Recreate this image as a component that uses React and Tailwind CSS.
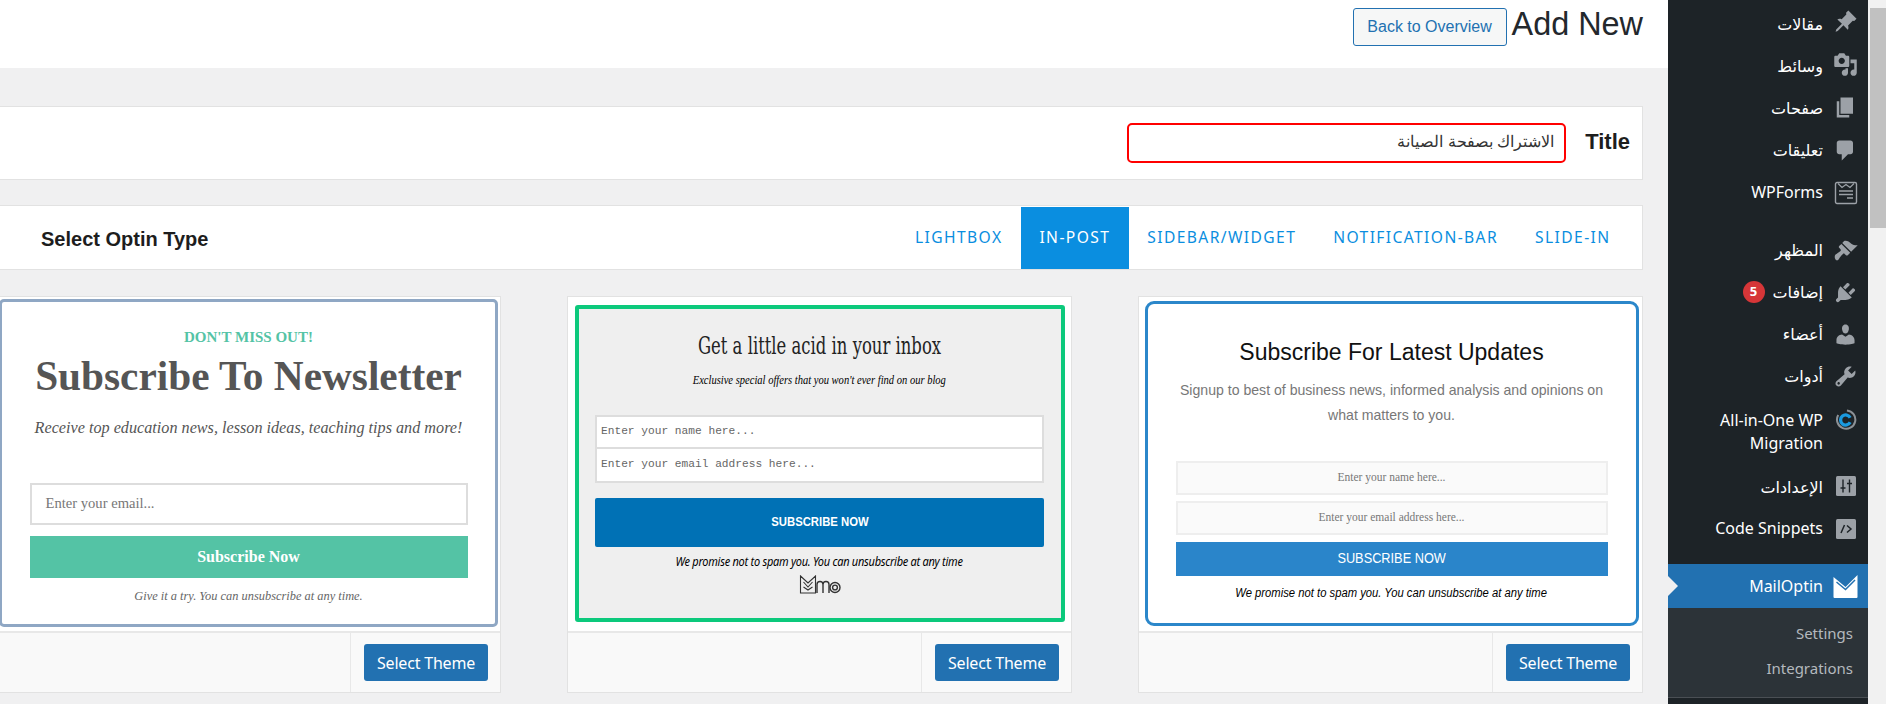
import React from "react";

const icons = {
  post: "M10.44 3.02l1.82-1.82 6.55 6.55-1.82 1.82-1.18-.2-3.75 3.74c.44 1.32.42 2.7-.26 3.43l-3.46-3.46-4.57 4.57-1.69.49.49-1.69 4.57-4.57L3.5 8.4c.73-.68 2.11-.7 3.43-.26l3.74-3.75-.23-1.37z",
  media: "M13 11V4c0-.55-.45-1-1-1h-1.67L9 1H5L3.67 3H2c-.55 0-1 .45-1 1v7c0 .55.45 1 1 1h10c.55 0 1-.45 1-1zM7 4.5c1.38 0 2.5 1.12 2.5 2.5S8.38 9.5 7 9.5 4.5 8.38 4.5 7 5.62 4.5 7 4.5zM14 6h5v10.5c0 1.38-1.12 2.5-2.5 2.5S14 17.88 14 16.5s1.12-2.5 2.5-2.5c.17 0 .34.02.5.05V9h-3V6zm-4 8.05V13h2v3.5c0 1.38-1.12 2.5-2.5 2.5S7 17.88 7 16.5 8.12 14 9.5 14c.17 0 .34.02.5.05z",
  page: "M6 15V2h10v13H6zm-1 1h8v2H3V5h2v11z",
  comment: "M5 2h9c1.1 0 2 .9 2 2v7c0 1.1-.9 2-2 2h-2l-5 5v-5H5c-1.1 0-2-.9-2-2V4c0-1.1.9-2 2-2z",
  appearance: "M14.48 11.06L7.41 3.99l1.5-1.5c.5-.56 2.3-.47 3.51.32 1.21.8 1.43 1.28 2.91 2.1 1.18.64 2.45 1.26 4.45.85zm-.71.71L6.7 4.7 4.93 6.47c-.39.39-.39 1.02 0 1.41l1.06 1.06c.39.39.39 1.03 0 1.42-.6.6-1.43 1.11-2.21 1.69-.35.26-.7.53-1.01.84C1.43 13.23.91 15.24 1.91 17.09c.35.64 1.14 1.13 1.78.77.93-.52 1.3-1.7 1.92-2.53.72-.96 1.63-1.92 2.31-2.61.39-.39 1.02-.39 1.41 0l1.06 1.06c.39.39 1.02.39 1.41 0z",
  plugins: "M13.11 4.36L9.87 7.6 8 5.73l3.24-3.24c.35-.34 1.05-.2 1.56.32.52.51.66 1.21.31 1.55zm-8 1.77l.91-1.12 9.01 9.01-1.19.84c-.71.71-2.63 1.16-3.82 1.16H6.14L4.9 17.26c-.59.59-1.54.59-2.12 0-.59-.58-.59-1.53 0-2.12l1.24-1.24v-3.88c0-1.13.4-3.19 1.09-3.89zm7.26 3.97l3.24-3.24c.34-.35 1.04-.21 1.55.31.52.51.66 1.21.31 1.55l-3.24 3.25z",
  users: "M10 9.25c-2.27 0-2.73-3.44-2.73-3.44C7 4.02 7.82 2 9.97 2c2.16 0 2.98 2.02 2.71 3.81 0 0-.41 3.44-2.68 3.44zm0 2.57L12.72 10c2.39 0 4.52 2.33 4.52 4.53v2.49s-3.65 1.13-7.24 1.13c-3.65 0-7.24-1.13-7.24-1.13v-2.49c0-2.25 1.94-4.48 4.47-4.48z",
  tools: "M16.68 9.77c-1.34 1.34-3.3 1.67-4.95.99l-5.41 6.52c-.99.99-2.59.99-3.58 0s-.99-2.59 0-3.57l6.52-5.42c-.68-1.65-.35-3.61.99-4.95 1.28-1.28 3.12-1.62 4.72-1.06l-2.89 2.89 2.82 2.82 2.86-2.87c.53 1.58.18 3.39-1.08 4.65zM3.81 16.21c.4.39 1.04.39 1.43 0 .4-.4.4-1.04 0-1.43-.39-.4-1.03-.4-1.43 0-.39.39-.39 1.03 0 1.43z",
};

function Dash({ name }) {
  return (
    <svg viewBox="0 0 20 20" className="w-[25px] h-[25px] fill-[#9ca1a7]">
      <path d={icons[name]} />
    </svg>
  );
}

function SettingsIcon() {
  return (
    <svg viewBox="0 0 20 20" className="w-[20px] h-[20px]">
      <rect width="20" height="20" rx="1.5" fill="#9ca1a7" />
      <path d="M7 3.5v13M4.5 12h5M13.5 3.5v13M11 7.5h5" fill="none" stroke="#1d2327" strokeWidth="1.4" />
    </svg>
  );
}

function WpformsIcon() {
  return (
    <svg viewBox="0 0 24 24" className="w-6 h-6" fill="none" stroke="#9ca1a7">
      <rect x="1.5" y="1.5" width="21" height="21" rx="1.5" strokeWidth="1.4" />
      <path d="M4 2.5l4 4 4-3 4 3 4-4" strokeWidth="1.2" />
      <path d="M5 10h14M5 13.5h14M13 17h6" strokeWidth="1.6" />
    </svg>
  );
}

function MigrationIcon() {
  return (
    <svg viewBox="0 0 24 24" className="w-[22px] h-[22px]" fill="none">
      <path d="M13 1.6a10 10 0 1 1-9.5 5" stroke="#8c9196" strokeWidth="2.2" />
      <path d="M16.5 9.5a5.5 5.5 0 1 0 0 5" stroke="#1a9ae0" strokeWidth="3.6" />
    </svg>
  );
}

function CodeIcon() {
  return (
    <svg viewBox="0 0 20 20" className="w-[20px] h-[20px]">
      <rect width="20" height="20" rx="1.5" fill="#9ca1a7" />
      <path d="M8.5 6L5 14M11 6.5l4 3.5-4 3.5" fill="none" stroke="#1d2327" strokeWidth="1.5" />
    </svg>
  );
}

function MailIcon() {
  return (
    <svg viewBox="0 0 24 23" className="w-[25px] h-[23px]">
      <path d="M0 2l12 10L24 0v22a1 1 0 0 1-1 1H1a1 1 0 0 1-1-1z" fill="#fff" />
      <path d="M3 7l9 7.5L21.5 5" fill="none" stroke="#2271b1" strokeWidth="1.5" />
    </svg>
  );
}

function MmoLogo() {
  return (
    <svg viewBox="0 0 42 19" className="w-[42px] h-[19px]" fill="none" stroke="#333" strokeWidth="1.4">
      <path d="M1.5 1l7.5 7 7.5-7v17h-15zM4.5 7l4.5 5 4.5-5M4.5 12l4.5 3 4.5-3" strokeWidth="1.1" />
      <path d="M18 18V9.5a3 3 0 0 1 6 0V18M24 9.5a3 3 0 0 1 6 0V18" />
      <circle cx="36" cy="12.5" r="5" />
      <circle cx="36" cy="12.5" r="2.4" />
    </svg>
  );
}

function MenuRow({ label, icon, badge, className, iconClass = "" }) {
  return (
    <div className={"flex items-center justify-end text-white " + className}>
      {badge && (
        <span className="mr-2 w-[22px] h-[22px] rounded-full bg-[#d63638] text-[13px] font-bold flex items-center justify-center">
          {badge}
        </span>
      )}
      <span className="text-right text-[16px] leading-[23px] max-w-[125px]">{label}</span>
      <span className={"w-[45px] flex items-center justify-center " + iconClass}>{icon}</span>
    </div>
  );
}

function Sidebar() {
  return (
    <aside className="w-[200px] shrink-0 bg-[#1d2327] h-full pt-[3px] font-['Noto_Sans','DejaVu_Sans',sans-serif] relative">
      <MenuRow className="h-[42px]" iconClass="-mt-[5px]" label="مقالات" icon={<Dash name="post" />} />
      <MenuRow className="h-[42px]" iconClass="-mt-[3px]" label="وسائط" icon={<Dash name="media" />} />
      <MenuRow className="h-[42px]" iconClass="-mt-[2px]" label="صفحات" icon={<Dash name="page" />} />
      <MenuRow className="h-[42px]" label="تعليقات" icon={<Dash name="comment" />} />
      <MenuRow className="h-[43px]" label="WPForms" icon={<WpformsIcon />} />
      <MenuRow className="h-[42px] mt-[15px]" label="المظهر" icon={<Dash name="appearance" />} />
      <MenuRow className="h-[42px]" label="إضافات" badge="5" icon={<Dash name="plugins" />} />
      <MenuRow className="h-[42px]" label="أعضاء" icon={<Dash name="users" />} />
      <MenuRow className="h-[42px]" label="أدوات" icon={<Dash name="tools" />} />
      <MenuRow className="h-[69px]" iconClass="self-start mt-[12px]" label="All-in-One WP Migration" icon={<MigrationIcon />} />
      <MenuRow className="h-[42px]" iconClass="-mt-[3px]" label="الإعدادات" icon={<SettingsIcon />} />
      <MenuRow className="h-[41px]" label="Code Snippets" icon={<CodeIcon />} />
      <div className="relative mt-[15px]">
        <MenuRow className="h-[44px] bg-[#2271b1]" label="MailOptin" icon={<MailIcon />} />
        <span className="absolute left-0 top-[12px] border-y-[10px] border-y-transparent border-l-[10px] border-l-[#f0f0f1]" />
      </div>
      <div className="bg-[#2c3338] h-[90px] pt-[8px] pr-[15px] text-right text-[15px] text-[#b4b9be] border-b border-[#4a4f54]">
        <div className="leading-[35px]">Settings</div>
        <div className="leading-[35px]">Integrations</div>
      </div>
    </aside>
  );
}

function SelectButton() {
  return (
    <button className="w-[124px] h-[37px] rounded-[3px] bg-[#2271b1] text-white text-[16px] font-['Noto_Sans',sans-serif] tracking-[-0.2px]">
      Select Theme
    </button>
  );
}

function Card({ frame, className }) {
  return (
    <div className="shrink-0 w-[505px] h-[397px] bg-white border border-[#e2e2e2] flex flex-col">
      <div className={"h-[334px] pb-[2px] flex items-center " + className}>{frame}</div>
      <div className="flex-1 bg-[#f9f9f9] border-t-2 border-[#e8e8e8] flex justify-end">
        <div className="border-l border-[#e8e8e8] w-[150px] flex items-center justify-end pr-[12px]">
          <SelectButton />
        </div>
      </div>
    </div>
  );
}

function NewsletterFrame() {
  return (
    <div className="w-[499px] h-[328px] bg-white border-[3px] border-[#8fa7c4] rounded-[5px] flex flex-col items-center font-['Liberation_Serif',serif] text-[#555]">
      <div className="mt-[25px] text-[15px] leading-[20px] font-bold text-[#54c3a5]">DON'T MISS OUT!</div>
      <div className="mt-[7px] text-[41.3px] leading-[44px] font-bold text-[#555] whitespace-nowrap">Subscribe To Newsletter</div>
      <div className="mt-[18px] text-[16.2px] leading-[24px] italic text-[#555] whitespace-nowrap">Receive top education news, lesson ideas, teaching tips and more!</div>
      <div className="mt-[43px] w-[438px] h-[42px] bg-white border-2 border-[#ddd] pl-[14px] flex items-center text-[14.6px] text-[#777]">Enter your email...</div>
      <div className="mt-[11px] w-[438px] h-[42px] bg-[#54c3a5] flex items-center justify-center text-white font-bold text-[16px]">Subscribe Now</div>
      <div className="mt-[10px] text-[12.4px] leading-[16px] italic text-[#666]">Give it a try. You can unsubscribe at any time.</div>
    </div>
  );
}

function AcidFrame() {
  return (
    <div className="w-[490px] h-[317px] bg-[#efefef] border-4 border-[#0cc97c] rounded-[3px] flex flex-col items-center text-[#222]">
      <div className="mt-[21px] text-[24px] leading-[32px] font-['DejaVu_Serif',serif] scale-x-[0.685] whitespace-nowrap">Get a little acid in your inbox</div>
      <div className="mt-[8px] text-[13px] leading-[20px] italic font-['Liberation_Serif',serif] text-black scale-x-[0.81] whitespace-nowrap">Exclusive special offers that you won't ever find on our blog</div>
      <div className="mt-[25px] w-[449px] h-[34px] bg-white border-2 border-[#ddd] pl-[4px] flex items-center text-[11.2px] font-['Liberation_Mono',monospace] text-[#666]">Enter your name here...</div>
      <div className="w-[449px] h-[34px] bg-white border-2 border-t-0 border-[#ddd] pl-[4px] flex items-center text-[11.2px] font-['Liberation_Mono',monospace] text-[#666]">Enter your email address here...</div>
      <div className="mt-[15px] w-[449px] h-[49px] rounded-[2px] bg-[#0071b5] flex items-center justify-center">
        <span className="text-white font-bold text-[13px] font-['Liberation_Sans',sans-serif] scale-x-[0.87]">SUBSCRIBE NOW</span>
      </div>
      <div className="mt-[6px] text-[12.5px] leading-[18px] italic font-['Noto_Sans',sans-serif] tracking-[-0.3px] text-black scale-x-[0.88] whitespace-nowrap">We promise not to spam you. You can unsubscribe at any time</div>
      <div className="mt-[4px]">
        <MmoLogo />
      </div>
    </div>
  );
}

function UpdatesFrame() {
  return (
    <div className="w-[494px] h-[325px] bg-white border-[3px] border-[#2b87ca] rounded-[9px] flex flex-col items-center font-['Liberation_Sans',sans-serif]">
      <div className="mt-[31px] text-[23px] leading-[34px] text-[#111] whitespace-nowrap">Subscribe For Latest Updates</div>
      <div className="mt-[9px] w-[440px] text-center text-[14.1px] leading-[25px] text-[#777]">
        Signup to best of business news, informed analysis and opinions on what matters to you.
      </div>
      <div className="mt-[33px] w-[432px] h-[34px] bg-[#fafafa] border-2 border-[#eee] flex items-center justify-center text-[11.5px] font-['Liberation_Serif',serif] text-[#777]">Enter your name here...</div>
      <div className="mt-[6px] w-[432px] h-[34px] bg-[#fafafa] border-2 border-[#eee] flex items-center justify-center text-[11.5px] font-['Liberation_Serif',serif] text-[#777]">Enter your email address here...</div>
      <div className="mt-[7px] w-[432px] h-[34px] bg-[#2a85ca] flex items-center justify-center">
        <span className="text-white text-[14.5px] scale-x-[0.88]">SUBSCRIBE NOW</span>
      </div>
      <div className="mt-[8px] text-[12.5px] leading-[18px] italic text-black scale-x-[0.9] whitespace-nowrap">We promise not to spam you. You can unsubscribe at any time</div>
    </div>
  );
}

export default function App() {
  return (
    <div className="flex w-[1886px] h-[704px] overflow-hidden bg-[#f0f0f1] font-['Liberation_Sans',sans-serif]">
      <main className="w-[1668px] shrink-0 overflow-hidden">
        {/* header bar */}
        <div className="h-[68px] bg-white flex justify-end items-start pr-[25px]">
          <button className="mt-[8px] w-[154px] h-[38px] rounded-[3px] border border-[#2271b1] bg-[#f6f7f7] text-[#2271b1] text-[16px]">
            Back to Overview
          </button>
          <h1 className="ml-[5px] mt-[5px] text-[32.4px] leading-[38px] text-[#23282d]">Add New</h1>
        </div>

        {/* title */}
        <div className="mt-[38px] mr-[25px] -ml-[2px] h-[74px] bg-white border border-[#e2e2e2] flex items-center justify-end">
          <div dir="rtl" className="w-[439px] h-[40px] rounded-[5px] border-2 border-[#ff0000] bg-white pr-[10px] pb-[2px] flex items-center text-[16px] text-[#333]">
            الاشتراك بصفحة الصيانة
          </div>
          <div className="ml-[19px] mr-[12px] mb-[3px] text-[22px] font-bold text-[#1d1d1d]">Title</div>
        </div>

        {/* optin type tabs */}
        <div className="mt-[25px] mr-[25px] -ml-[2px] h-[65px] bg-white border border-[#e2e2e2] flex items-center">
          <div className="ml-[42px] mt-[3px] text-[20px] font-bold text-[#1d1d1d]">Select Optin Type</div>
          <div className="ml-auto mr-[13px] flex h-[62px] text-[15.6px] tracking-[1.4px] text-[#0a8ee0] font-['Noto_Sans',sans-serif]">
            <div className="flex items-center px-[18.5px] pt-[1px]">LIGHTBOX</div>
            <div className="flex items-center px-[18.5px] pt-[1px] bg-[#0a8ee0] text-white">IN-POST</div>
            <div className="flex items-center px-[18.5px] pt-[1px]">SIDEBAR/WIDGET</div>
            <div className="flex items-center px-[18.5px] pt-[1px]">NOTIFICATION-BAR</div>
            <div className="flex items-center px-[18.5px] pt-[1px]">SLIDE-IN</div>
          </div>
        </div>

        {/* theme cards */}
        <div className="mt-[26px] mr-[25px] flex justify-end gap-[66px]">
          <Card className="justify-end pr-[2px]" frame={<NewsletterFrame />} />
          <Card className="justify-center" frame={<AcidFrame />} />
          <Card className="justify-center pl-[2px]" frame={<UpdatesFrame />} />
        </div>
      </main>

      <Sidebar />

      {/* page scrollbar */}
      <div className="w-[18px] shrink-0 bg-[#f1f1f1] pt-[8px] pl-[2px]">
        <div className="h-[220px] bg-[#c1c1c1]" />
      </div>
    </div>
  );
}
